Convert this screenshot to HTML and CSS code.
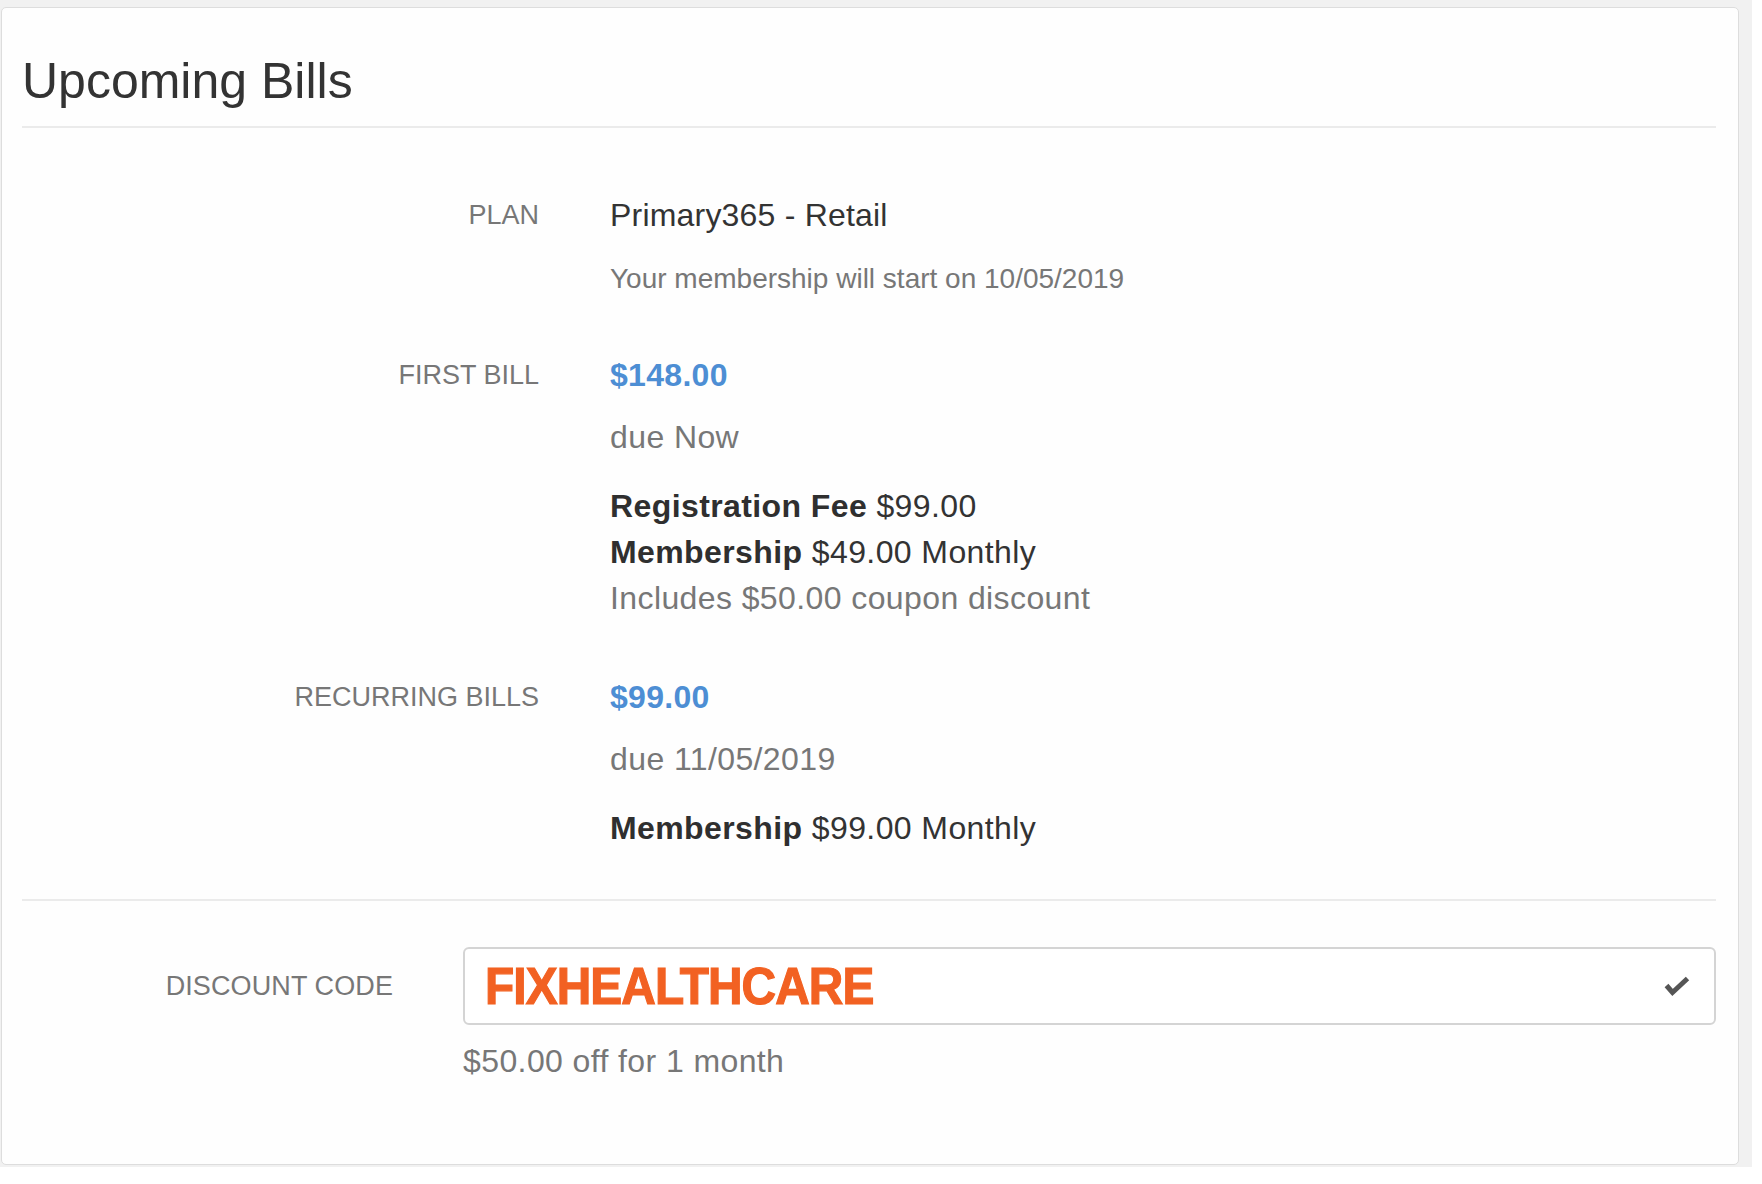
FILE: index.html
```html
<!DOCTYPE html>
<html lang="en">
<head>
<meta charset="utf-8">
<title>Upcoming Bills</title>
<link rel="stylesheet" href="styles.css">
</head>
<body>
<div class="frame">
  <section class="card">
    <h1 class="card-title">Upcoming Bills</h1>
    <div class="rule"></div>

    <div class="summary">
      <div class="row">
        <div class="label">PLAN</div>
        <div class="value">
          <div class="plan-name">Primary365 - Retail</div>
          <div class="note">Your membership will start on 10/05/2019</div>
        </div>
      </div>

      <div class="row">
        <div class="label">FIRST BILL</div>
        <div class="value">
          <div class="amount">$148.00</div>
          <div class="due">due Now</div>
          <div class="details">
            <div class="line"><b>Registration Fee</b> $99.00</div>
            <div class="line"><b>Membership</b> $49.00 Monthly</div>
            <div class="line muted">Includes $50.00 coupon discount</div>
          </div>
        </div>
      </div>

      <div class="row">
        <div class="label">RECURRING BILLS</div>
        <div class="value">
          <div class="amount">$99.00</div>
          <div class="due">due 11/05/2019</div>
          <div class="details">
            <div class="line"><b>Membership</b> $99.00 Monthly</div>
          </div>
        </div>
      </div>
    </div>

    <div class="rule rule-bottom"></div>

    <div class="discount">
      <div class="discount-label">DISCOUNT CODE</div>
      <div class="code-input">
        <span class="code-text">FIXHEALTHCARE</span>
        <svg class="check" width="26" height="22" viewBox="0 0 26 22" aria-hidden="true">
          <polyline points="2.5,9.5 8.5,16.5 23.5,2.5" fill="none" stroke="#555" stroke-width="5" stroke-linejoin="miter"/>
        </svg>
      </div>
      <div class="discount-hint">$50.00 off for 1 month</div>
    </div>
  </section>
</div>
</body>
</html>
```

FILE: styles.css
```css
html, body {
  margin: 0;
  padding: 0;
  background: #ffffff;
}

body {
  font-family: "Liberation Sans", Arial, Helvetica, sans-serif;
  color: #333333;
}

.frame {
  width: 1752px;
  box-sizing: border-box;
  padding: 7px 13px 2px 1px;
  background: #f1f1f1;
}

.card {
  background: #fefefe;
  border: 1px solid #dddddd;
  border-radius: 5px;
  padding: 45px 22px 80px 20px;
}

.card-title {
  margin: 0;
  font-size: 50px;
  line-height: 56px;
  font-weight: normal;
  color: #333333;
}

.rule {
  height: 2px;
  background: #ebebeb;
  margin-top: 17px;
}

.summary {
  padding-top: 64px;
}

.row {
  display: grid;
  grid-template-columns: 517px 1fr;
  column-gap: 71px;
}

.row + .row {
  margin-top: 53px;
}

.label {
  text-align: right;
  font-size: 27px;
  line-height: 46px;
  color: #777777;
}

.plan-name {
  font-size: 32px;
  line-height: 46px;
  letter-spacing: 0.2px;
  color: #333333;
}

.note {
  margin-top: 21px;
  font-size: 28px;
  line-height: 40px;
  color: #777777;
}

.amount {
  font-size: 32px;
  line-height: 46px;
  font-weight: bold;
  letter-spacing: 0.3px;
  color: #4d8ed4;
}

.due {
  margin-top: 16px;
  font-size: 32px;
  line-height: 46px;
  letter-spacing: 0.4px;
  color: #777777;
}

.details {
  margin-top: 23px;
}

.line {
  font-size: 32px;
  line-height: 46px;
  letter-spacing: 0.4px;
  color: #333333;
}

.line b {
  font-weight: bold;
  color: #2f2f2f;
}

.line.muted {
  color: #777777;
}

.rule-bottom {
  margin-top: 48px;
}

.discount {
  display: grid;
  grid-template-columns: 371px 1fr;
  column-gap: 70px;
  align-items: center;
  margin-top: 46px;
}

.discount-label {
  text-align: right;
  font-size: 27px;
  line-height: 46px;
  letter-spacing: 0.1px;
  color: #777777;
}

.code-input {
  height: 78px;
  box-sizing: border-box;
  border: 2px solid #d4d4d4;
  border-radius: 6px;
  background: #ffffff;
  display: flex;
  align-items: center;
  justify-content: space-between;
  padding: 0 24px 0 20px;
}

.code-text {
  display: inline-block;
  font-family: "Liberation Sans", Arial, sans-serif;
  font-size: 52px;
  line-height: 52px;
  font-weight: bold;
  color: #f26122;
  letter-spacing: -1px;
  -webkit-text-stroke: 1.2px #f26122;
  transform: scaleX(0.92);
  transform-origin: left center;
}

.check {
  display: block;
  margin-top: 2px;
}

.discount-hint {
  grid-column: 2;
  margin-top: 13px;
  font-size: 32px;
  line-height: 46px;
  letter-spacing: 0.4px;
  color: #777777;
}
```
